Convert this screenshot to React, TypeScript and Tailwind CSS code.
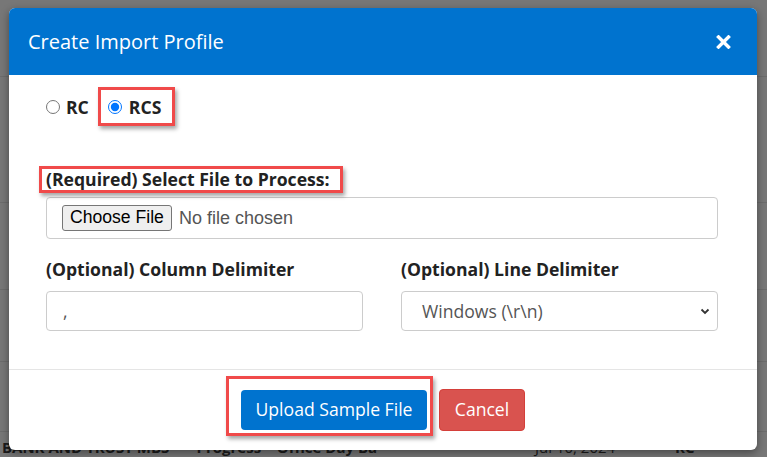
import { useState } from "react";

const font = { fontFamily: '"Open Sans", "Noto Sans", sans-serif' };
const arial = { fontFamily: '"Liberation Sans", Arial, sans-serif' };

// red annotation frame drawn over an element
function Mark({ className }: { className: string }) {
  return (
    <span
      className={`pointer-events-none absolute border-[3px] border-[#f04a4a] shadow-[2px_3px_4px_rgba(0,0,0,0.35)] ${className}`}
    />
  );
}

export default function App() {
  const [kind, setKind] = useState("RCS");

  return (
    <div className="relative h-[457px] w-[767px] overflow-hidden bg-[#777777]" style={font}>
      {/* page behind the overlay */}
      <div className="flex flex-col">
        <div className="h-[77px] border-b border-[#6c6c6c]" />
        <div className="h-[126px] border-b border-[#6c6c6c]" />
        <div className="h-[87px] border-b border-[#6c6c6c]" />
        <div className="h-[72px] border-b border-[#6c6c6c]" />
        <div className="h-[70px] border-b border-[#6c6c6c]" />
        <div className="flex h-[20px] items-start pt-[8px] text-[15px] font-bold leading-none text-[#1b1b1b]">
          <span className="w-[535px] pl-[2px]">BANK AND TRUST MBS &nbsp;&nbsp;&nbsp;&nbsp;&nbsp; Progress &nbsp;&nbsp; Office Day Ba</span>
          <span className="w-[140px] font-normal">Jul 10, 2024</span>
          <span>RC</span>
        </div>
      </div>

      {/* modal */}
      <div className="absolute left-[9px] top-[8px] flex h-[442px] w-[748px] flex-col rounded-[6px] bg-white shadow-[0_3px_9px_rgba(0,0,0,0.4)]">
        <div className="flex h-[67px] items-center justify-between rounded-t-[6px] bg-[#0073cf] pl-[19px] pr-[26px]">
          <h1 className="text-[20px] leading-none text-white">Create Import Profile</h1>
          <svg width="15" height="14" viewBox="0 0 15 14">
            <path d="M2.5 2 L12.5 12 M12.5 2 L2.5 12" stroke="white" strokeWidth="3.4" strokeLinecap="square" />
          </svg>
        </div>

        <div className="flex h-[295px] flex-col border-b border-[#e5e5e5] pl-[37px] pr-[39px]">
          <div className="mt-[20px] flex h-[24px] items-center text-[17.6px] font-bold text-[#222]">
            <label className="flex items-center gap-[6px]">
              <input
                type="radio"
                name="kind"
                checked={kind === "RC"}
                onChange={() => setKind("RC")}
                className="m-0 h-[14px] w-[14px] accent-[#0075ff]"
              />
              RC
            </label>
            <label className="relative ml-[19px] flex items-center gap-[7px]">
              <input
                type="radio"
                name="kind"
                checked={kind === "RCS"}
                onChange={() => setKind("RCS")}
                className="m-0 h-[14px] w-[14px] accent-[#0075ff]"
              />
              RCS
              <Mark className="-left-[10px] -top-[7px] h-[39px] w-[77px]" />
            </label>
          </div>

          <div className="relative mt-[48px] flex h-[26px] items-center">
            <span className="text-[17.6px] font-bold leading-none text-[#222]">(Required) Select File to Process:</span>
            <Mark className="-left-[7px] -top-[1px] h-[27px] w-[304px]" />
          </div>

          <div className="mt-[4px] flex h-[42px] items-center rounded-[4px] border border-[#cccccc] pl-[15px]">
            <button
              className="h-[26px] rounded-[3px] border border-[#767676] bg-[#efefef] px-[7px] text-[17.6px] leading-none text-black"
              style={arial}
            >
              Choose File
            </button>
            <span className="ml-[7px] text-[18px] text-[#555]" style={arial}>
              No file chosen
            </span>
          </div>

          <div className="mt-[19px] grid grid-cols-2 gap-[38px]">
            <div className="flex flex-col">
              <span className="flex h-[24px] items-center text-[17.6px] font-bold leading-none text-[#222]">
                (Optional) Column Delimiter
              </span>
              <input
                defaultValue=","
                className="mt-[9px] h-[40px] rounded-[4px] border border-[#cccccc] px-[16px] text-[17.6px] text-[#555] outline-none"
              />
            </div>
            <div className="flex flex-col">
              <span className="flex h-[24px] items-center text-[17.6px] font-bold leading-none text-[#222]">
                (Optional) Line Delimiter
              </span>
              <div className="mt-[9px] flex h-[40px] items-center justify-between rounded-[4px] border border-[#cccccc] pl-[20px] pr-[7px]">
                <span className="text-[17.6px] text-[#555]">Windows (\r\n)</span>
                <svg width="10" height="10" viewBox="0 0 10 10">
                  <path d="M1.5 3.5 L5 7 L8.5 3.5" fill="none" stroke="#333" strokeWidth="1.8" />
                </svg>
              </div>
            </div>
          </div>
        </div>

        <div className="flex flex-1 items-center justify-center gap-[12px] pb-[1px]">
          <div className="relative">
            <button className="h-[40px] w-[186px] rounded-[4px] bg-[#0073cf] text-[17.6px] text-white">
              Upload Sample File
            </button>
            <Mark className="-left-[15px] -top-[14px] h-[60px] w-[207px]" />
          </div>
          <button className="h-[42px] w-[86px] rounded-[4px] border border-[#d43f3a] bg-[#d9534f] text-[17.6px] text-white">
            Cancel
          </button>
        </div>
      </div>
    </div>
  );
}
